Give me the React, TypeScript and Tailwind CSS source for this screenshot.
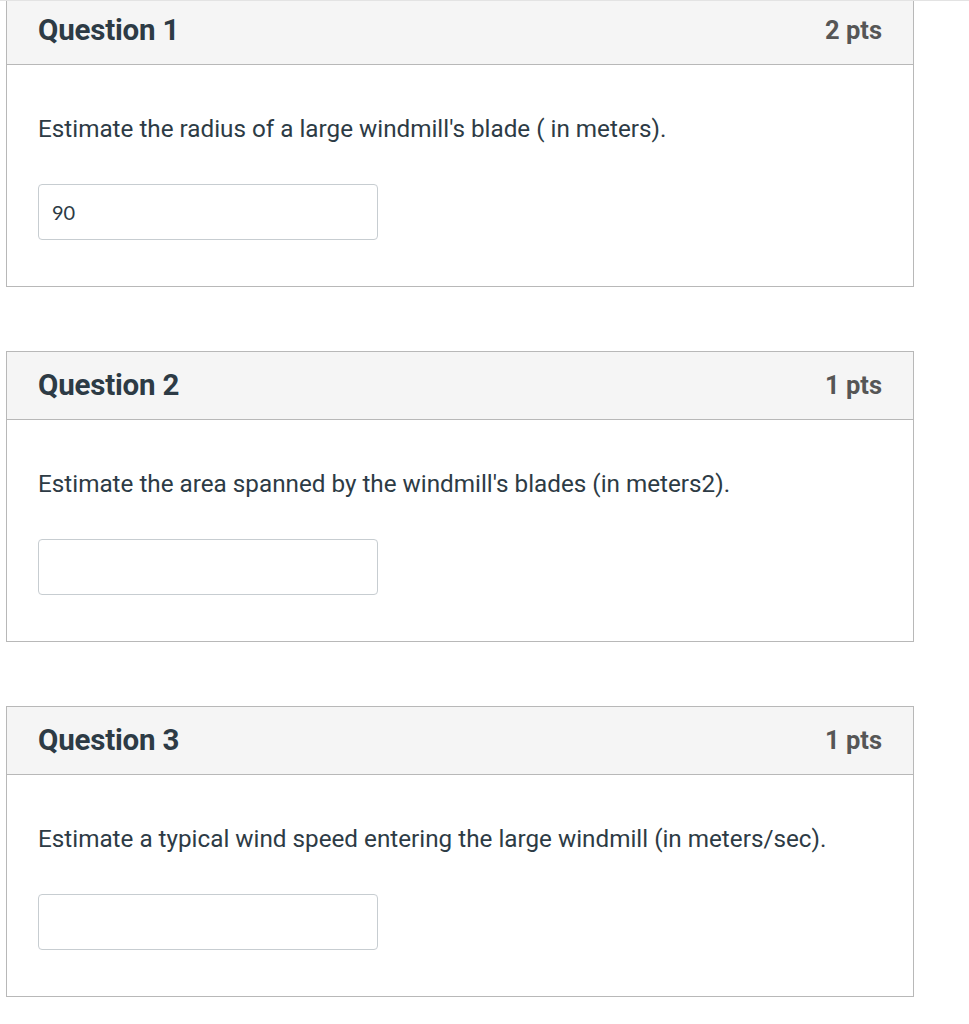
import React from 'react';

const questions = [
  { id: 1, pts: 2, text: "Estimate the radius of a large windmill's blade ( in meters).", value: '90' },
  { id: 2, pts: 1, text: "Estimate the area spanned by the windmill's blades (in meters2).", value: '' },
  { id: 3, pts: 1, text: 'Estimate a typical wind speed entering the large windmill (in meters/sec).', value: '' },
];

export default function App() {
  return (
    <div className="min-h-screen bg-white overflow-hidden" style={{ fontFamily: 'Roboto, "Liberation Sans", sans-serif' }}>
      <div className="relative z-10 h-px bg-[#e3e3e3]" />
      <div className="-mt-[5px] flex flex-col gap-[64px] pb-10">
        {questions.map((q) => (
          <div key={q.id} className="ml-[6px] w-[908px] border border-[#b8b8b8] bg-white">
            <div className="h-[68px] flex items-center justify-between px-[31px] bg-[#f5f5f5] border-b border-[#b8b8b8]">
              <h2 className="text-[29.5px] font-bold text-[#2d3b45] tracking-[-0.2px]">Question {q.id}</h2>
              <span className="text-[25.5px] font-bold text-[#565656]">{q.pts} pts</span>
            </div>
            <div className="px-[31px] pt-[46px] pb-[46px]">
              <p className="text-[24.25px] leading-[36px] text-[#2d3b45]">{q.text}</p>
              <input
                readOnly
                value={q.value}
                className="mt-[37px] block w-[340px] h-[56px] rounded-[4px] border border-[#c7cdd1] px-[13px] text-[20px] text-[#2d3b45] outline-none"
                style={{ fontFamily: 'Lato, "Liberation Sans", sans-serif' }}
              />
            </div>
          </div>
        ))}
      </div>
    </div>
  );
}
